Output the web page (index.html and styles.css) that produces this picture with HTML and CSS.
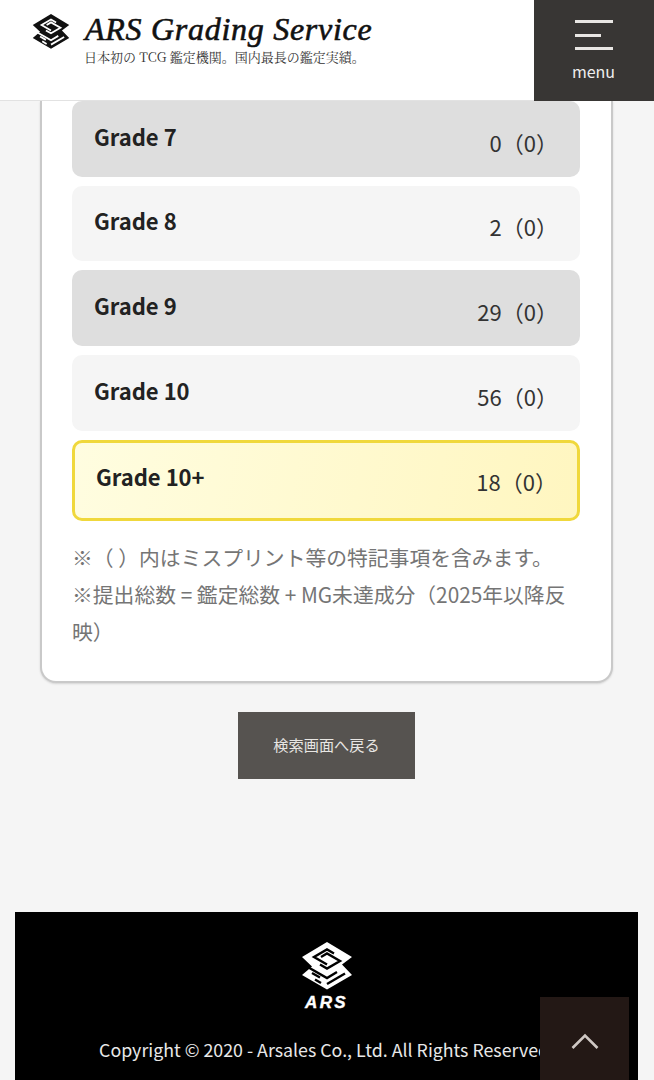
FILE: index.html
```html
<!DOCTYPE html>
<html lang="ja">
<head>
<meta charset="utf-8">
<title>ARS Grading Service</title>
<link rel="stylesheet" href="styles.css">
</head>
<body>
<header class="site-header">
  <div class="brand">
    <svg class="brand-logo logo-dark" viewBox="0 0 52 48" aria-hidden="true">
      <path class="logo-fg" d="M26 0 L51 15 L41 22.5 L51 33 L26 47.5 L1 33 L11 24.5 L1 15 Z"/>
      <g class="logo-cut">
        <path d="M33 11.5 L26 7.5 L13 15 L26 22.5"/>
        <path d="M20 15 L26 11.5 L39 19 L26 26.5 L19 22.5"/>
        <path d="M5 24 L26 36 L36 30"/>
        <path d="M11 31 L19 35.5"/>
        <path d="M26 42 L44 31.5"/>
        <path d="M20 41 L14 37.5"/>
      </g>
    </svg>
    <div class="brand-text">
      <div class="brand-title">ARS Grading Service</div>
      <div class="brand-sub">日本初の TCG 鑑定機関。国内最長の鑑定実績。</div>
    </div>
  </div>
  <button class="menu-btn">
    <span class="menu-lines"><i class="ml"></i><i class="ml ml-short"></i><i class="ml"></i></span>
    <span class="menu-label">menu</span>
  </button>
</header>
<main class="content">
  <section class="card">
    <div class="grade-list">
      <div class="grade grade-dark"><span class="grade-name">Grade 7</span><span class="grade-count">0（0）</span></div>
      <div class="grade"><span class="grade-name">Grade 8</span><span class="grade-count">2（0）</span></div>
      <div class="grade grade-dark"><span class="grade-name">Grade 9</span><span class="grade-count">29（0）</span></div>
      <div class="grade"><span class="grade-name">Grade 10</span><span class="grade-count">56（0）</span></div>
      <div class="grade grade-top"><span class="grade-name">Grade 10+</span><span class="grade-count">18（0）</span></div>
    </div>
    <p class="note">※（ ）内はミスプリント等の特記事項を含みます。<br>※提出総数 = 鑑定総数 + MG未達成分（2025年以降反映）</p>
  </section>
  <div class="back-wrap"><a class="back-btn">検索画面へ戻る</a></div>
</main>
<footer class="site-footer">
  <svg class="footer-logo logo-light" viewBox="0 0 52 48" aria-hidden="true">
    <path class="logo-fg" d="M26 0 L51 15 L41 22.5 L51 33 L26 47.5 L1 33 L11 24.5 L1 15 Z"/>
    <g class="logo-cut">
      <path d="M33 11.5 L26 7.5 L13 15 L26 22.5"/>
      <path d="M20 15 L26 11.5 L39 19 L26 26.5 L19 22.5"/>
      <path d="M5 24 L26 36 L36 30"/>
      <path d="M11 31 L19 35.5"/>
      <path d="M26 42 L44 31.5"/>
      <path d="M20 41 L14 37.5"/>
    </g>
  </svg>
  <div class="footer-ars">ARS</div>
  <div class="copyright">Copyright © 2020 - Arsales Co., Ltd. All Rights Reserved.</div>
</footer>
<a class="to-top">
  <svg viewBox="0 0 28 16" class="to-top-icon" aria-hidden="true"><path d="M1.5 15 L14 2.5 L26.5 15" fill="none" stroke="#cfc8c4" stroke-width="2.6"/></svg>
</a>
</body>
</html>
```
FILE: styles.css
```css
* { box-sizing: border-box; }
html, body { margin: 0; padding: 0; height: 1080px; overflow: hidden; }
body {
  background: #f5f5f5;
  font-family: "Noto Sans CJK JP", "Noto Sans", sans-serif;
  color: #222;
}
.site-header {
  position: relative;
  z-index: 2;
  height: 101px;
  background: #fff;
  border-bottom: 1px solid #e2e2e2;
  display: flex;
  justify-content: space-between;
  align-items: flex-start;
}
.brand { display: flex; padding: 13px 0 0 32px; gap: 15px; }
.brand-logo { width: 38px; height: 35px; margin-top: 1px; }
.logo-dark .logo-fg { fill: #111; }
.logo-light .logo-fg { fill: #fff; }
.logo-cut { fill: none; stroke-width: 2.4; }
.logo-dark .logo-cut { stroke: #fff; }
.logo-light .logo-cut { stroke: #000; }
.brand-title {
  font-family: "Liberation Serif", serif;
  font-style: italic;
  font-size: 32px;
  line-height: 32px;
  letter-spacing: 0.72px;
  -webkit-text-stroke: 0.6px #111;
  color: #111;
  white-space: nowrap;
}
.brand-sub {
  font-family: "Noto Serif CJK JP", "Noto Sans CJK JP", serif;
  font-size: 13px;
  line-height: 18px;
  margin-top: 3px;
  margin-left: -1px;
  color: #333;
  white-space: nowrap;
}
.menu-btn {
  width: 120px;
  height: 101px;
  background: #383634;
  border: 0;
  padding: 20px 0 0;
  display: flex;
  flex-direction: column;
  align-items: center;
  font-family: inherit;
}
.menu-lines { display: flex; flex-direction: column; gap: 10.5px; width: 38px; }
.ml { display: block; height: 3px; background: #e8e6e3; }
.ml-short { width: 26px; }
.menu-label { color: #eee; font-size: 16px; line-height: 20px; margin-top: 11px; margin-right: 1px; font-family: "Noto Sans CJK JP", sans-serif; }
.content { padding: 0 41px 0 40px; }
.card {
  width: 573px;
  background: #fff;
  border: 2px solid #c9c9c9;
  border-top: 0;
  border-radius: 0 0 16px 16px;
  box-shadow: 0 1px 2px #d4d4d4;
  padding: 0 31px 31px 30px;
}
.grade-list { display: flex; flex-direction: column; gap: 9.2px; }
.grade {
  height: 75.5px;
  background: #f5f5f5;
  border-radius: 10px;
  display: flex;
  justify-content: space-between;
  align-items: center;
  padding: 0 22px 0 22px;
}
.grade-dark { background: #dedede; }
.grade-name { font-weight: 700; font-size: 22px; color: #222; position: relative; top: -3px; }
.grade-count { font-size: 22px; color: #333; position: relative; top: 3px; }
.grade-top {
  height: 81px;
  border: 3px solid #f0d83c;
  background: linear-gradient(100deg, #fffde0, #fff6c0);
  padding: 0 20px 0 21px;
}
.grade-top .grade-name { top: -4px; }
.grade-top .grade-count { top: 1px; }
.note {
  margin: 18px 0 0;
  font-size: 20.8px;
  line-height: 37px;
  color: #757575;
}
.back-wrap { display: flex; justify-content: center; padding-top: 29px; }
.back-btn {
  width: 177px;
  height: 67px;
  background: #565350;
  color: #e8e6e3;
  font-size: 15.2px;
  padding-bottom: 3px;
  display: flex;
  align-items: center;
  justify-content: center;
}
.site-footer {
  position: absolute;
  left: 15px;
  top: 912px;
  width: 623px;
  height: 168px;
  background: #000;
  color: #e8e8e8;
  overflow: hidden;
  display: flex;
  flex-direction: column;
  align-items: center;
  padding-top: 30px;
}
.footer-logo { width: 52px; height: 48px; }
.footer-ars {
  font-family: "Liberation Sans", sans-serif;
  font-style: italic;
  font-weight: 700;
  font-size: 17px;
  line-height: 18px;
  letter-spacing: 2.4px;
  -webkit-text-stroke: 0.4px #fff;
  color: #fff;
  margin-top: 4px;
}
.copyright { font-size: 17.8px; line-height: 24px; margin-top: 25px; white-space: nowrap; }
.to-top {
  position: fixed;
  left: 540px;
  top: 997px;
  width: 89px;
  height: 83px;
  background: #231815;
  display: flex;
  justify-content: center;
  padding-top: 36px;
}
.to-top-icon { width: 28px; height: 16px; }
```
